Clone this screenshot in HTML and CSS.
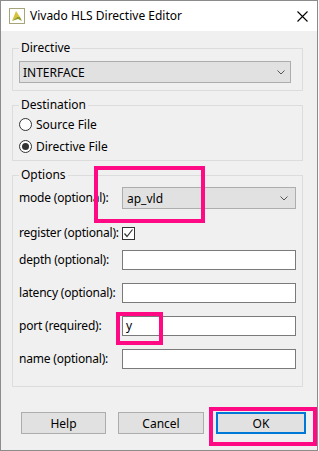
FILE: index.html
```html
<!DOCTYPE html>
<html lang="en">
<head>
    <meta charset="UTF-8">
    <meta name="viewport" content="width=device-width, initial-scale=1.0">
    <title>Vivado HLS Directive Editor</title>
    <link rel="stylesheet" href="styles.css">
</head>
<body>
    <div class="window">
        <div class="titlebar">
            <svg class="app-icon" width="16" height="16" viewBox="0 0 16 16">
                <rect x="0.5" y="0.5" width="15" height="15" fill="#fff" stroke="#a8a47a"/>
                <polygon points="3,13 7,3 11,9 8,9" fill="#d8c23a"/>
                <polygon points="3,13 8,9 11,9 13,13 9,11" fill="#8f9d2a"/>
            </svg>
            <span class="title">Vivado HLS Directive Editor</span>
            <svg class="close" width="11" height="11" viewBox="0 0 11 11">
                <path d="M0.5 0.5 L10.5 10.5 M10.5 0.5 L0.5 10.5" stroke="#000" stroke-width="1.1"/>
            </svg>
        </div>

        <div class="content">
            <fieldset class="group group-directive">
                <legend>Directive</legend>
                <div class="select">
                    <span>INTERFACE</span>
                    <svg class="chevron" width="8" height="5" viewBox="0 0 8 5"><path d="M0.5 0.5 L4 4 L7.5 0.5" fill="none" stroke="#555"/></svg>
                </div>
            </fieldset>

            <fieldset class="group group-dest">
                <legend>Destination</legend>
                <div class="radio-row"><span class="radio"></span>Source File</div>
                <div class="radio-row"><span class="radio checked"></span>Directive File</div>
            </fieldset>

            <fieldset class="group group-options">
                <legend>Options</legend>
                <div class="row row-mode">
                    <span class="label">mode (optional):</span>
                    <div class="select">
                        <span>ap_vld</span>
                        <svg class="chevron" width="8" height="5" viewBox="0 0 8 5"><path d="M0.5 0.5 L4 4 L7.5 0.5" fill="none" stroke="#555"/></svg>
                    </div>
                </div>
                <div class="row row-check">
                    <span class="label">register (optional):</span>
                    <span class="checkbox">
                        <svg width="11" height="11" viewBox="0 0 11 11"><path d="M1.5 5.5 L4 8.5 L9.5 1.5" fill="none" stroke="#333" stroke-width="1.2"/></svg>
                    </span>
                </div>
                <div class="row row-depth">
                    <span class="label">depth (optional):</span>
                    <div class="textbox"></div>
                </div>
                <div class="row">
                    <span class="label">latency (optional):</span>
                    <div class="textbox"></div>
                </div>
                <div class="row">
                    <span class="label">port (required):</span>
                    <div class="textbox">y</div>
                </div>
                <div class="row">
                    <span class="label">name (optional):</span>
                    <div class="textbox"></div>
                </div>
            </fieldset>

            <div class="buttons">
                <button class="btn btn-help">Help</button>
                <button class="btn btn-cancel">Cancel</button>
                <button class="btn btn-ok">OK</button>
            </div>
        </div>

        <div class="mark mark-mode"></div>
        <div class="mark mark-port"></div>
        <div class="mark mark-ok"></div>
    </div>
</body>
</html>
```

FILE: styles.css
```css
body {
    margin: 0;
    background-color: #fff;
    font-family: 'Noto Sans', sans-serif;
    font-size: 12px;
    color: #000;
}

.window {
    position: relative;
    width: 318px;
    height: 451px;
    box-sizing: border-box;
    border: 1px solid #8c8c8c;
    background-color: #f0f0f0;
}

.titlebar {
    height: 30px;
    background-color: #fff;
    display: flex;
    align-items: center;
    padding: 0 9px 0 8px;
}

.app-icon {
    margin-right: 5px;
}

.title {
    line-height: 16px;
}

.close {
    margin-left: auto;
}

.content {
    padding: 9px 0 0 11px;
}

.group {
    width: 291px;
    box-sizing: border-box;
    margin: 0 0 6px 0;
    border: 1px solid #dcdcdc;
    min-inline-size: 0;
}

.group legend {
    padding: 0 2px;
    line-height: 16px;
}

.group-directive {
    padding: 5px 11px 7px 6px;
}

.group-dest {
    padding: 0 6px 3px 6px;
}

.group-options {
    padding: 0 6px 17px 6px;
}

.select {
    height: 22px;
    box-sizing: border-box;
    background-color: #e1e1e1;
    border: 1px solid #adadad;
    display: flex;
    align-items: center;
    padding: 0 5px 0 3px;
}

.select .chevron {
    margin-left: auto;
}

.radio-row {
    height: 22px;
    display: flex;
    align-items: center;
}

.radio {
    width: 13px;
    height: 13px;
    box-sizing: border-box;
    border: 1px solid #333;
    border-radius: 50%;
    background-color: #fff;
    margin-right: 4px;
    display: flex;
    align-items: center;
    justify-content: center;
}

.radio.checked::after {
    content: "";
    width: 7px;
    height: 7px;
    border-radius: 50%;
    background-color: #333;
}

.row {
    display: grid;
    grid-template-columns: 103px 1fr;
    align-items: center;
    margin-top: 13px;
}

.row-mode {
    margin-top: 4px;
}

.row-check {
    margin-top: 16px;
    height: 13px;
}

.row-depth {
    margin-top: 12px;
}

.label {
    line-height: 16px;
    white-space: nowrap;
    letter-spacing: -0.2px;
}

.row-mode .select {
    padding: 0 7px 0 4px;
}

.checkbox {
    width: 13px;
    height: 13px;
    box-sizing: border-box;
    border: 1px solid #333;
    background-color: #fff;
    display: flex;
    align-items: center;
    justify-content: center;
}

.textbox {
    height: 20px;
    box-sizing: border-box;
    background-color: #fff;
    border: 1px solid #7a7a7a;
    padding: 0 3px;
    line-height: 18px;
}

.buttons {
    display: flex;
    gap: 12px;
    margin: 25px 0 0 9px;
}

.btn {
    height: 22px;
    box-sizing: border-box;
    background-color: #e1e1e1;
    border: 1px solid #adadad;
    font-family: 'Noto Sans', sans-serif;
    font-size: 12px;
    color: #000;
    padding: 0;
}

.btn-help {
    width: 85px;
}

.btn-cancel {
    width: 86px;
}

.btn-ok {
    width: 90px;
    border: 2px solid #0078d7;
}

.mark {
    position: absolute;
    border: 4px solid #ff0a84;
    box-sizing: border-box;
}

.mark-mode {
    left: 93px;
    top: 165px;
    width: 111px;
    height: 57px;
}

.mark-port {
    left: 115px;
    top: 311px;
    width: 47px;
    height: 33px;
}

.mark-ok {
    left: 208px;
    top: 406px;
    width: 108px;
    height: 39px;
}
```
